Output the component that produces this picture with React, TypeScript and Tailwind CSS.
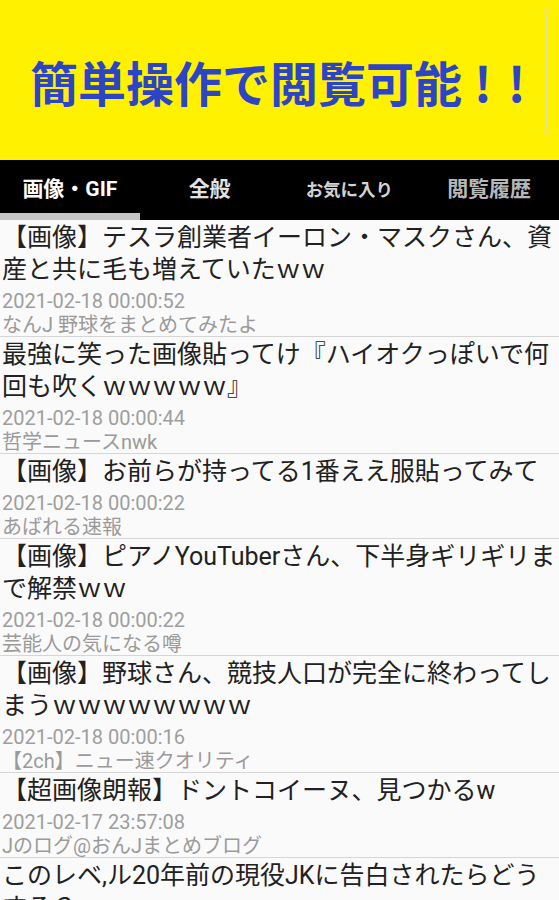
import React from "react";

const items = [
  {
    title: "【画像】テスラ創業者イーロン・マスクさん、資産と共に毛も増えていたｗｗ",
    date: "2021-02-18 00:00:52",
    source: "なんJ 野球をまとめてみたよ",
  },
  {
    title: "最強に笑った画像貼ってけ『ハイオクっぽいで何回も吹くｗｗｗｗｗ』",
    date: "2021-02-18 00:00:44",
    source: "哲学ニュースnwk",
  },
  {
    title: "【画像】お前らが持ってる1番ええ服貼ってみて",
    date: "2021-02-18 00:00:22",
    source: "あばれる速報",
  },
  {
    title: "【画像】ピアノYouTuberさん、下半身ギリギリまで解禁ｗｗ",
    date: "2021-02-18 00:00:22",
    source: "芸能人の気になる噂",
  },
  {
    title: "【画像】野球さん、競技人口が完全に終わってしまうｗｗｗｗｗｗｗｗ",
    date: "2021-02-18 00:00:16",
    source: "【2ch】ニュー速クオリティ",
  },
  {
    title: "【超画像朗報】ドントコイーヌ、見つかるw",
    date: "2021-02-17 23:57:08",
    source: "Jのログ@おんJまとめブログ",
  },
  {
    title: "このレベ,ル20年前の現役JKに告白されたらどうする？",
    date: "2021-02-17 23:55:01",
    source: "",
  },
];

const font = "font-['Roboto','Noto_Sans_CJK_JP',sans-serif]";

export default function App() {
  return (
    <div className={`w-[559px] h-[900px] overflow-hidden bg-[#fafafa] ${font}`}>
      {/* banner */}
      <div className="relative h-[160px] bg-[#fff100] flex items-center pl-[30px] pt-[2px]">
        <div className="text-[48px] leading-none font-bold text-[#2c44c6] font-['Noto_Sans_CJK_JP',sans-serif] whitespace-nowrap">
          簡単操作で閲覧可能
          <span className="ml-[12px]">!</span>
          <span className="ml-[16px]">!</span>
        </div>
        <div className="absolute left-[546px] top-[7px] h-[128px] w-px bg-[#e9df9c]" />
      </div>

      {/* tabs */}
      <div className="grid grid-cols-4 h-[60px] bg-black">
        <div className="relative flex items-center justify-center text-[21px] font-bold text-white">
          画像・GIF
          <div className="absolute left-0 bottom-0 h-[7px] w-full bg-[#c6c6c6]" />
        </div>
        <div className="flex items-center justify-center text-[21px] font-bold text-[#e2e2e2]">
          全般
        </div>
        <div className="flex items-center justify-center text-[17.5px] font-bold text-[#d2d2d2]">
          お気に入り
        </div>
        <div className="flex items-center justify-center text-[21px] font-bold text-[#b8b8b8]">
          閲覧履歴
        </div>
      </div>

      {/* list */}
      <div className="flex flex-col">
        {items.map((it, i) => (
          <div key={i} className="border-b border-[#d6d6d6] px-[2px] pt-[2px]">
            <div className="text-[25px] leading-[32px] text-[#212121]">{it.title}</div>
            <div className="mt-[2px] text-[20px] leading-[26px] text-[#9e9e9e]">{it.date}</div>
            <div className="text-[20px] leading-[22px] text-[#9a9a9a]">{it.source}</div>
          </div>
        ))}
      </div>
    </div>
  );
}
